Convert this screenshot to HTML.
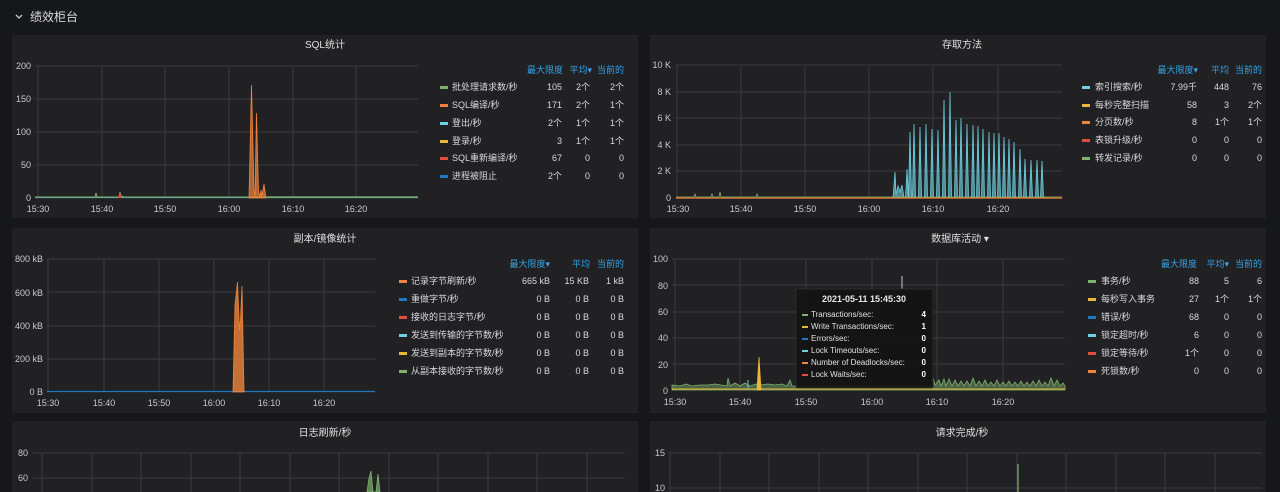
<!DOCTYPE html>
<html><head><meta charset="utf-8"><style>
html,body{margin:0;padding:0;background:#161719;width:1280px;height:492px;overflow:hidden}
svg{display:block}
text{font-family:"Liberation Sans","Noto Sans CJK SC",sans-serif;fill:#d8d9da}
.ax text{font-size:9px;fill:#c8c9ca}
text.t{font-size:10px;fill:#e0e0e0}
.h text{font-size:9px;fill:#33a2e5}
.l text{font-size:9px;fill:#d8d9da}
.g{stroke:#3a3b3f;stroke-width:1}
.tt text{font-size:8px;fill:#e0e0e0}
.tv text{font-size:8px;font-weight:bold;fill:#ffffff}
</style></head><body>
<svg width="1280" height="492" viewBox="0 0 1280 492">
<rect width="1280" height="492" fill="#161719"/>
<path d="M16 15 L19 18 L22 15" stroke="#c8c9ca" stroke-width="1.3" fill="none"/>
<text x="30" y="21" style="font-size:12px" fill="#d8d9da">绩效柜台</text>

<rect x="12" y="35" width="626" height="183" fill="#212124"/>
<rect x="650" y="35" width="616" height="183" fill="#212124"/>
<rect x="12" y="228" width="626" height="185" fill="#212124"/>
<rect x="650" y="228" width="616" height="185" fill="#212124"/>
<rect x="12" y="421" width="626" height="80" fill="#212124"/>
<rect x="650" y="421" width="616" height="80" fill="#212124"/>

<!-- Panel 1 -->
<text class="t" x="325" y="48" text-anchor="middle">SQL统计</text>
<g class="g">
<line x1="35" y1="66" x2="418" y2="66"/><line x1="35" y1="99" x2="418" y2="99"/><line x1="35" y1="132" x2="418" y2="132"/><line x1="35" y1="165" x2="418" y2="165"/>
<line x1="38" y1="66" x2="38" y2="198"/><line x1="102" y1="66" x2="102" y2="198"/><line x1="165" y1="66" x2="165" y2="198"/><line x1="229" y1="66" x2="229" y2="198"/><line x1="293" y1="66" x2="293" y2="198"/><line x1="356" y1="66" x2="356" y2="198"/>
</g>
<g class="ax" text-anchor="end"><text x="31" y="69">200</text><text x="31" y="102">150</text><text x="31" y="135">100</text><text x="31" y="168">50</text><text x="31" y="201">0</text></g>
<g class="ax" text-anchor="middle"><text x="38" y="212">15:30</text><text x="102" y="212">15:40</text><text x="165" y="212">15:50</text><text x="229" y="212">16:00</text><text x="293" y="212">16:10</text><text x="356" y="212">16:20</text></g>
<line x1="35" y1="197.5" x2="418" y2="197.5" stroke="#6ed0e0" stroke-width="1.2" opacity=".7"/>
<path d="M35 197 L95 197 L96 193 L97 197 L119 197 L120 192 L121 196 L124 197 L418 197" stroke="#7eb26d" fill="none"/>
<path d="M118 198 L120 192 L122 198 Z" fill="#e24d42"/>
<path d="M249 198 L251.5 85 L254 190 L255 196 L256.5 113 L258.5 192 L260 196 L261 190 L262 196 L264 184 L266 198 Z" fill="#ef843c" stroke="#ef843c" stroke-width=".8" fill-opacity=".7"/>
<path d="M268 198 L268 196 L418 196 L418 198Z" fill="#7eb26d" opacity=".35"/>
<g class="h" text-anchor="end"><text x="563" y="73">最大限度</text><text x="592" y="73">平均▾</text><text x="624" y="73">当前的</text></g>
<g class="l">
<rect x="440" y="86" width="8" height="3" fill="#7eb26d"/><text x="452" y="90">批处理请求数/秒</text>
<rect x="440" y="104" width="8" height="3" fill="#ef843c"/><text x="452" y="108">SQL编译/秒</text>
<rect x="440" y="122" width="8" height="3" fill="#6ed0e0"/><text x="452" y="126">登出/秒</text>
<rect x="440" y="140" width="8" height="3" fill="#eab839"/><text x="452" y="144">登录/秒</text>
<rect x="440" y="157" width="8" height="3" fill="#e24d42"/><text x="452" y="161">SQL重新编译/秒</text>
<rect x="440" y="175" width="8" height="3" fill="#1f78c1"/><text x="452" y="179">进程被阻止</text>
</g>
<g class="l" text-anchor="end">
<text x="562" y="90">105</text><text x="590" y="90">2个</text><text x="624" y="90">2个</text>
<text x="562" y="108">171</text><text x="590" y="108">2个</text><text x="624" y="108">1个</text>
<text x="562" y="126">2个</text><text x="590" y="126">1个</text><text x="624" y="126">1个</text>
<text x="562" y="144">3</text><text x="590" y="144">1个</text><text x="624" y="144">1个</text>
<text x="562" y="161">67</text><text x="590" y="161">0</text><text x="624" y="161">0</text>
<text x="562" y="179">2个</text><text x="590" y="179">0</text><text x="624" y="179">0</text>
</g>

<!-- Panel 2 -->
<text class="t" x="962" y="48" text-anchor="middle">存取方法</text>
<g class="g">
<line x1="676" y1="65" x2="1062" y2="65"/><line x1="676" y1="92" x2="1062" y2="92"/><line x1="676" y1="118" x2="1062" y2="118"/><line x1="676" y1="145" x2="1062" y2="145"/><line x1="676" y1="171" x2="1062" y2="171"/>
<line x1="677" y1="65" x2="677" y2="198"/><line x1="741" y1="65" x2="741" y2="198"/><line x1="805" y1="65" x2="805" y2="198"/><line x1="869" y1="65" x2="869" y2="198"/><line x1="933" y1="65" x2="933" y2="198"/><line x1="998" y1="65" x2="998" y2="198"/>
</g>
<g class="ax" text-anchor="end"><text x="671" y="68">10 K</text><text x="671" y="95">8 K</text><text x="671" y="121">6 K</text><text x="671" y="148">4 K</text><text x="671" y="174">2 K</text><text x="671" y="201">0</text></g>
<g class="ax" text-anchor="middle"><text x="678" y="212">15:30</text><text x="741" y="212">15:40</text><text x="805" y="212">15:50</text><text x="869" y="212">16:00</text><text x="933" y="212">16:10</text><text x="998" y="212">16:20</text></g>
<path d="M893 198 L895 172 L896 195 L898 186 L900 192 L902 185 L904 198 M905.5 198 L907 169 L908.5 198 M908.5 198 L910 132 L911.5 198 M912.5 198 L914 124 L915.5 198 M918.5 198 L920 127 L921.5 198 M924.5 198 L926 124 L927.5 198 M930.5 198 L932 129 L933.5 198 M936.5 198 L938 130 L939.5 198 M942.5 198 L944 100 L945.5 198 M948.5 198 L950 92 L951.5 198 M954.5 198 L956 120 L957.5 198 M959.5 198 L961 118 L962.5 198 M965.5 198 L967 124 L968.5 198 M971.5 198 L973 125 L974.5 198 M976.5 198 L978 126 L979.5 198 M981.5 198 L983 129 L984.5 198 M987.5 198 L989 132 L990.5 198 M992.5 198 L994 133 L995.5 198 M997.5 198 L999 133 L1000.5 198 M1002.5 198 L1004 137 L1005.5 198 M1007.5 198 L1009 139 L1010.5 198 M1012.5 198 L1014 142 L1015.5 198 M1018.5 198 L1020 149 L1021.5 198 M1023.5 198 L1025 159 L1026.5 198 M1029.5 198 L1031 160 L1032.5 198 M1035.5 198 L1037 160 L1038.5 198 M1040.5 198 L1042 161 L1043.5 198" fill="#6ed0e0" fill-opacity=".6" stroke="#6ed0e0" stroke-width=".8"/>
<path d="M676 197 L694 197 L695 194 L696 197 L711 197 L712 194 L713 197 L719 197 L720 192 L721 197 L756 197 L757 194 L758 197 L1062 197" stroke="#7eb26d" fill="none" stroke-width=".8"/>
<line x1="676" y1="198" x2="1062" y2="198" stroke="#ef843c" stroke-width="1.2"/>
<g class="h" text-anchor="end"><text x="1198" y="73">最大限度▾</text><text x="1229" y="73">平均</text><text x="1262" y="73">当前的</text></g>
<g class="l">
<rect x="1082" y="86" width="8" height="3" fill="#6ed0e0"/><text x="1095" y="90">索引搜索/秒</text>
<rect x="1082" y="104" width="8" height="3" fill="#eab839"/><text x="1095" y="108">每秒完整扫描</text>
<rect x="1082" y="121" width="8" height="3" fill="#ef843c"/><text x="1095" y="125">分页数/秒</text>
<rect x="1082" y="139" width="8" height="3" fill="#e24d42"/><text x="1095" y="143">表锁升级/秒</text>
<rect x="1082" y="157" width="8" height="3" fill="#7eb26d"/><text x="1095" y="161">转发记录/秒</text>
</g>
<g class="l" text-anchor="end">
<text x="1197" y="90">7.99千</text><text x="1229" y="90">448</text><text x="1262" y="90">76</text>
<text x="1197" y="108">58</text><text x="1229" y="108">3</text><text x="1262" y="108">2个</text>
<text x="1197" y="125">8</text><text x="1229" y="125">1个</text><text x="1262" y="125">1个</text>
<text x="1197" y="143">0</text><text x="1229" y="143">0</text><text x="1262" y="143">0</text>
<text x="1197" y="161">0</text><text x="1229" y="161">0</text><text x="1262" y="161">0</text>
</g>

<!-- Panel 3 -->
<text class="t" x="325" y="242" text-anchor="middle">副本/镜像统计</text>
<g class="g">
<line x1="47" y1="259" x2="375" y2="259"/><line x1="47" y1="292" x2="375" y2="292"/><line x1="47" y1="326" x2="375" y2="326"/><line x1="47" y1="359" x2="375" y2="359"/>
<line x1="48" y1="259" x2="48" y2="392"/><line x1="104" y1="259" x2="104" y2="392"/><line x1="159" y1="259" x2="159" y2="392"/><line x1="214" y1="259" x2="214" y2="392"/><line x1="269" y1="259" x2="269" y2="392"/><line x1="324" y1="259" x2="324" y2="392"/>
</g>
<g class="ax" text-anchor="end"><text x="43" y="262">800 kB</text><text x="43" y="296">600 kB</text><text x="43" y="329">400 kB</text><text x="43" y="362">200 kB</text><text x="43" y="395">0 B</text></g>
<g class="ax" text-anchor="middle"><text x="48" y="406">15:30</text><text x="104" y="406">15:40</text><text x="159" y="406">15:50</text><text x="214" y="406">16:00</text><text x="269" y="406">16:10</text><text x="324" y="406">16:20</text></g>
<line x1="47" y1="391.5" x2="375" y2="391.5" stroke="#1f78c1" stroke-width="1.3"/>
<path d="M233 392 L235 305 L237.5 282 L239.5 330 L240.5 320 L242 286 L244 392 Z" fill="#ef843c" fill-opacity=".8" stroke="#ef843c" stroke-width=".8"/>
<g class="h" text-anchor="end"><text x="550" y="267">最大限度▾</text><text x="590" y="267">平均</text><text x="624" y="267">当前的</text></g>
<g class="l">
<rect x="399" y="280" width="8" height="3" fill="#ef843c"/><text x="411" y="284">记录字节刷新/秒</text>
<rect x="399" y="298" width="8" height="3" fill="#1f78c1"/><text x="411" y="302">重做字节/秒</text>
<rect x="399" y="316" width="8" height="3" fill="#e24d42"/><text x="411" y="320">接收的日志字节/秒</text>
<rect x="399" y="334" width="8" height="3" fill="#6ed0e0"/><text x="411" y="338">发送到传输的字节数/秒</text>
<rect x="399" y="352" width="8" height="3" fill="#eab839"/><text x="411" y="356">发送到副本的字节数/秒</text>
<rect x="399" y="370" width="8" height="3" fill="#7eb26d"/><text x="411" y="374">从副本接收的字节数/秒</text>
</g>
<g class="l" text-anchor="end">
<text x="550" y="284">665 kB</text><text x="589" y="284">15 KB</text><text x="624" y="284">1 kB</text>
<text x="550" y="302">0 B</text><text x="589" y="302">0 B</text><text x="624" y="302">0 B</text>
<text x="550" y="320">0 B</text><text x="589" y="320">0 B</text><text x="624" y="320">0 B</text>
<text x="550" y="338">0 B</text><text x="589" y="338">0 B</text><text x="624" y="338">0 B</text>
<text x="550" y="356">0 B</text><text x="589" y="356">0 B</text><text x="624" y="356">0 B</text>
<text x="550" y="374">0 B</text><text x="589" y="374">0 B</text><text x="624" y="374">0 B</text>
</g>

<!-- Panel 4 -->
<text class="t" x="960" y="242" text-anchor="middle">数据库活动 ▾</text>
<g class="g">
<line x1="672" y1="259" x2="1065" y2="259"/><line x1="672" y1="285" x2="1065" y2="285"/><line x1="672" y1="312" x2="1065" y2="312"/><line x1="672" y1="338" x2="1065" y2="338"/><line x1="672" y1="364" x2="1065" y2="364"/>
<line x1="675" y1="259" x2="675" y2="390"/><line x1="740" y1="259" x2="740" y2="390"/><line x1="806" y1="259" x2="806" y2="390"/><line x1="872" y1="259" x2="872" y2="390"/><line x1="937" y1="259" x2="937" y2="390"/><line x1="1003" y1="259" x2="1003" y2="390"/>
</g>
<g class="ax" text-anchor="end"><text x="668" y="262">100</text><text x="668" y="289">80</text><text x="668" y="315">60</text><text x="668" y="341">40</text><text x="668" y="368">20</text><text x="668" y="394">0</text></g>
<g class="ax" text-anchor="middle"><text x="675" y="405">15:30</text><text x="740" y="405">15:40</text><text x="806" y="405">15:50</text><text x="872" y="405">16:00</text><text x="937" y="405">16:10</text><text x="1003" y="405">16:20</text></g>
<path d="M672 390 L672 385 L680 386 L686 384 L692 386 L700 385 L708 385 L715 384 L727 386 L728 378 L730 386 L735 383 L740 386 L745 383 L750 386 L756 384 L760 385 L768 384 L775 385 L782 384 L787 386 L790 380 L792 386 L800 386 L930 386 L933 377 L935 385 L939 380 L941 386 L944 379 L946 386 L949 379 L952 386 L955 380 L958 386 L961 381 L964 386 L967 381 L970 386 L973 378 L976 386 L979 381 L982 386 L985 380 L988 386 L991 382 L994 386 L997 380 L1000 386 L1003 382 L1006 386 L1009 381 L1012 386 L1015 382 L1018 386 L1021 381 L1024 386 L1027 382 L1030 386 L1033 381 L1036 386 L1039 380 L1042 386 L1045 382 L1048 386 L1051 378 L1054 386 L1057 380 L1060 386 L1063 383 L1065 386 L1065 390 Z" fill="#7eb26d" fill-opacity=".45" stroke="#7eb26d" stroke-width=".8"/>
<path d="M757 390 L759 357 L761 390 Z" fill="#eab839" stroke="#eab839" stroke-width=".8"/>
<line x1="672" y1="389" x2="1065" y2="389" stroke="#eab839" stroke-width="1"/>
<line x1="902" y1="276" x2="902" y2="290" stroke="#a0a0a0" stroke-width="1.3"/>
<line x1="748" y1="388" x2="748" y2="380" stroke="#6ed0e0" stroke-width="1"/>
<rect x="796" y="289" width="137" height="99" rx="2" fill="#141414" fill-opacity=".95" stroke="#2a2a2a"/>
<text x="864" y="302" text-anchor="middle" style="font-size:9px;font-weight:bold;fill:#e8e8e8">2021-05-11 15:45:30</text>
<g class="tt">
<rect x="802" y="314" width="6" height="2" fill="#7eb26d"/><text x="811" y="317">Transactions/sec:</text>
<rect x="802" y="326" width="6" height="2" fill="#eab839"/><text x="811" y="329">Write Transactions/sec:</text>
<rect x="802" y="338" width="6" height="2" fill="#1f78c1"/><text x="811" y="341">Errors/sec:</text>
<rect x="802" y="350" width="6" height="2" fill="#6ed0e0"/><text x="811" y="353">Lock Timeouts/sec:</text>
<rect x="802" y="362" width="6" height="2" fill="#ef843c"/><text x="811" y="365">Number of Deadlocks/sec:</text>
<rect x="802" y="374" width="6" height="2" fill="#e24d42"/><text x="811" y="377">Lock Waits/sec:</text>
</g>
<g class="tv" text-anchor="end">
<text x="926" y="317">4</text><text x="926" y="329">1</text><text x="926" y="341">0</text><text x="926" y="353">0</text><text x="926" y="365">0</text><text x="926" y="377">0</text>
</g>
<g class="h" text-anchor="end"><text x="1197" y="267">最大限度</text><text x="1229" y="267">平均▾</text><text x="1262" y="267">当前的</text></g>
<g class="l">
<rect x="1088" y="280" width="8" height="3" fill="#7eb26d"/><text x="1101" y="284">事务/秒</text>
<rect x="1088" y="298" width="8" height="3" fill="#eab839"/><text x="1101" y="302">每秒写入事务</text>
<rect x="1088" y="316" width="8" height="3" fill="#1f78c1"/><text x="1101" y="320">错误/秒</text>
<rect x="1088" y="334" width="8" height="3" fill="#6ed0e0"/><text x="1101" y="338">锁定超时/秒</text>
<rect x="1088" y="352" width="8" height="3" fill="#e24d42"/><text x="1101" y="356">锁定等待/秒</text>
<rect x="1088" y="370" width="8" height="3" fill="#ef843c"/><text x="1101" y="374">死锁数/秒</text>
</g>
<g class="l" text-anchor="end">
<text x="1199" y="284">88</text><text x="1229" y="284">5</text><text x="1262" y="284">6</text>
<text x="1199" y="302">27</text><text x="1229" y="302">1个</text><text x="1262" y="302">1个</text>
<text x="1199" y="320">68</text><text x="1229" y="320">0</text><text x="1262" y="320">0</text>
<text x="1199" y="338">6</text><text x="1229" y="338">0</text><text x="1262" y="338">0</text>
<text x="1199" y="356">1个</text><text x="1229" y="356">0</text><text x="1262" y="356">0</text>
<text x="1199" y="374">0</text><text x="1229" y="374">0</text><text x="1262" y="374">0</text>
</g>

<!-- Row 3 -->
<text class="t" x="325" y="436" text-anchor="middle">日志刷新/秒</text>
<g class="g">
<line x1="33" y1="453" x2="625" y2="453"/><line x1="33" y1="478" x2="625" y2="478"/>
<line x1="42" y1="453" x2="42" y2="492"/><line x1="92" y1="453" x2="92" y2="492"/><line x1="141" y1="453" x2="141" y2="492"/><line x1="191" y1="453" x2="191" y2="492"/><line x1="240" y1="453" x2="240" y2="492"/><line x1="290" y1="453" x2="290" y2="492"/><line x1="339" y1="453" x2="339" y2="492"/><line x1="389" y1="453" x2="389" y2="492"/><line x1="438" y1="453" x2="438" y2="492"/><line x1="488" y1="453" x2="488" y2="492"/><line x1="537" y1="453" x2="537" y2="492"/><line x1="587" y1="453" x2="587" y2="492"/>
</g>
<g class="ax" text-anchor="end"><text x="28" y="456">80</text><text x="28" y="481">60</text></g>
<path d="M367 492 L369 478 L371 471 L373 492 L376 492 L378 474 L380 492 Z" fill="#7eb26d" fill-opacity=".7" stroke="#7eb26d" stroke-width=".8"/>
<text class="t" x="962" y="436" text-anchor="middle">请求完成/秒</text>
<g class="g">
<line x1="668" y1="453" x2="1262" y2="453"/><line x1="668" y1="488" x2="1262" y2="488"/>
<line x1="670" y1="453" x2="670" y2="492"/><line x1="720" y1="453" x2="720" y2="492"/><line x1="769" y1="453" x2="769" y2="492"/><line x1="819" y1="453" x2="819" y2="492"/><line x1="868" y1="453" x2="868" y2="492"/><line x1="918" y1="453" x2="918" y2="492"/><line x1="967" y1="453" x2="967" y2="492"/><line x1="1017" y1="453" x2="1017" y2="492"/><line x1="1066" y1="453" x2="1066" y2="492"/><line x1="1116" y1="453" x2="1116" y2="492"/><line x1="1165" y1="453" x2="1165" y2="492"/><line x1="1215" y1="453" x2="1215" y2="492"/>
</g>
<g class="ax" text-anchor="end"><text x="665" y="456">15</text><text x="665" y="491">10</text></g>
<line x1="1018" y1="464" x2="1018" y2="492" stroke="#7eb26d" stroke-width="1.2"/>
</svg>
</body></html>
